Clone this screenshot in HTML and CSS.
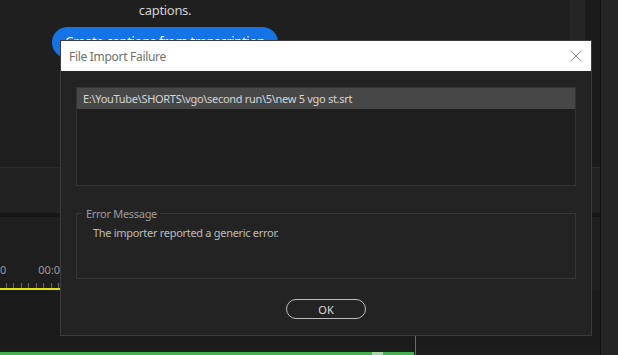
FILE: index.html
```html
<!DOCTYPE html>
<html lang="en">
<head>
    <meta charset="UTF-8">
    <meta name="viewport" content="width=device-width, initial-scale=1.0">
    <title>File Import Failure</title>
    <link rel="stylesheet" href="styles.css">
</head>
<body>
    <div class="app">
        <div class="main">
            <div class="top">
                <div class="captions-panel">
                    <div class="prompt">
                        <p class="prompt-text">captions.</p>
                        <button class="pill" type="button">Create captions from transcription</button>
                    </div>
                </div>
                <div class="strip"></div>
                <div class="strip-dark"></div>
            </div>
            <div class="toolbar"></div>
            <div class="divider"></div>
            <div class="timeline">
                <div class="timecodes">
                    <span class="tc tc-first">0</span>
                    <span class="tc">00:00:00</span>
                </div>
                <div class="ticks"></div>
                <div class="work-area"></div>
                <div class="tracks"></div>
                <div class="clip-row">
                    <div class="clip"><span class="clip-mark"></span></div>
                </div>
                <div class="playhead"></div>
            </div>
        </div>
        <div class="side"></div>
    </div>

    <div class="dialog">
        <div class="titlebar">
            <span class="title">File Import Failure</span>
            <svg class="close" width="12" height="12" viewBox="0 0 12 12">
                <path d="M0.5 0.5 L11.5 11.5 M11.5 0.5 L0.5 11.5" stroke="#8a8a8a" stroke-width="1" fill="none"/>
            </svg>
        </div>
        <div class="dialog-body">
            <div class="file-list">
                <div class="file-row selected">E:\YouTube\SHORTS\vgo\second run\5\new 5 vgo st.srt</div>
            </div>
            <fieldset class="error-box">
                <legend>Error Message</legend>
                <p class="error-text">The importer reported a generic error.</p>
            </fieldset>
            <div class="actions">
                <button class="ok" type="button">OK</button>
            </div>
        </div>
    </div>
</body>
</html>
```

FILE: styles.css
```css
body {
    margin: 0;
    width: 618px;
    height: 355px;
    overflow: hidden;
    background-color: #1e1e1e;
    font-family: "Noto Sans", "Open Sans", sans-serif;
}
.app {
    display: flex;
    height: 355px;
}
.main {
    width: 600px;
    display: flex;
    flex-direction: column;
}
.side {
    flex: 1;
    border-left: 1px solid #121212;
    background-color: #242424;
}

/* captions panel behind the dialog */
.top {
    height: 167px;
    display: flex;
}
.captions-panel {
    width: 570px;
    background-color: #1f1f1f;
}
.strip {
    width: 15px;
    background-color: #252525;
}
.strip-dark {
    width: 15px;
    background-color: #1b1b1b;
}
.prompt {
    width: 226px;
    margin-left: 52px;
    text-align: center;
}
.prompt-text {
    margin: 1px 0 8px;
    font-size: 13px;
    line-height: 18px;
    letter-spacing: -0.3px;
    color: #d2d2d2;
}
.pill {
    width: 226px;
    height: 31px;
    padding: 0 0 4px;
    border: none;
    border-radius: 16px;
    background-color: #1473e6;
    color: #fff;
    font-family: inherit;
    font-size: 13px;
    letter-spacing: -0.3px;
    white-space: nowrap;
}
.toolbar {
    height: 45px;
    border-top: 1px solid #2b2b2b;
    background-color: #222;
}
.divider {
    height: 4px;
    background-color: #161616;
}

/* timeline */
.timeline {
    flex: 1;
    position: relative;
    display: flex;
    flex-direction: column;
    background-color: #1e1e1e;
}
.timecodes {
    display: flex;
    gap: 32px;
    margin-top: 45px;
    height: 16px;
    font-size: 11px;
    line-height: 16px;
    color: #9c9c9c;
}
.ticks {
    width: 560px;
    margin-top: 5px;
    height: 5px;
    background: repeating-linear-gradient(90deg, transparent 0, transparent 6px, #6a6a6a 6px, #6a6a6a 7px, transparent 7px, transparent 7.5px);
}
.work-area {
    width: 560px;
    height: 2px;
    background-color: #e6e21a;
}
.tracks {
    flex: 1;
    background-color: #1b1b1b;
}
.clip-row {
    height: 4px;
}
.clip {
    width: 414px;
    height: 4px;
    background-color: #45b04f;
}
.clip-mark {
    display: block;
    width: 11px;
    height: 3px;
    margin: 1px 0 0 372px;
    background-color: #a9d6a9;
}
.playhead {
    position: absolute;
    left: 415px;
    top: 0;
    bottom: 0;
    width: 1px;
    background-color: #3478b8;
}

/* dialog */
.dialog {
    position: absolute;
    left: 60px;
    top: 40px;
    width: 532px;
    height: 296px;
    box-sizing: border-box;
    border: 1px solid #3c3c3c;
    background-color: #232323;
    display: flex;
    flex-direction: column;
    letter-spacing: -0.3px;
}
.titlebar {
    height: 30px;
    background-color: #fff;
    display: flex;
    align-items: center;
    justify-content: space-between;
    padding: 0 9px 0 8px;
}
.title {
    font-size: 12px;
    color: #6f6f6f;
}
.dialog-body {
    flex: 1;
    padding: 16px 15px 0 15px;
    display: flex;
    flex-direction: column;
}
.file-list {
    height: 97px;
    border: 1px solid #333;
    background-color: #1e1e1e;
}
.file-row {
    height: 21px;
    line-height: 21px;
    padding-left: 6px;
    font-size: 11px;
    color: #d6d6d6;
}
.selected {
    background-color: #474747;
}
.error-box {
    margin: 20px 0 0;
    padding: 0 16px;
    height: 73px;
    box-sizing: border-box;
    border: 1px solid #363636;
}
.error-box legend {
    margin-left: -10px;
    padding: 0 3px;
    font-size: 11px;
    color: #9c9c9c;
}
.error-text {
    margin: 4px 0 0;
    font-size: 11px;
    color: #bdbdbd;
}
.actions {
    display: flex;
    justify-content: center;
    margin-top: 20px;
}
.ok {
    width: 80px;
    height: 20px;
    padding: 0;
    border: 1px solid #bdbdbd;
    border-radius: 10px;
    background-color: transparent;
    color: #dcdcdc;
    font-family: inherit;
    font-size: 11px;
    letter-spacing: 0;
}
```
